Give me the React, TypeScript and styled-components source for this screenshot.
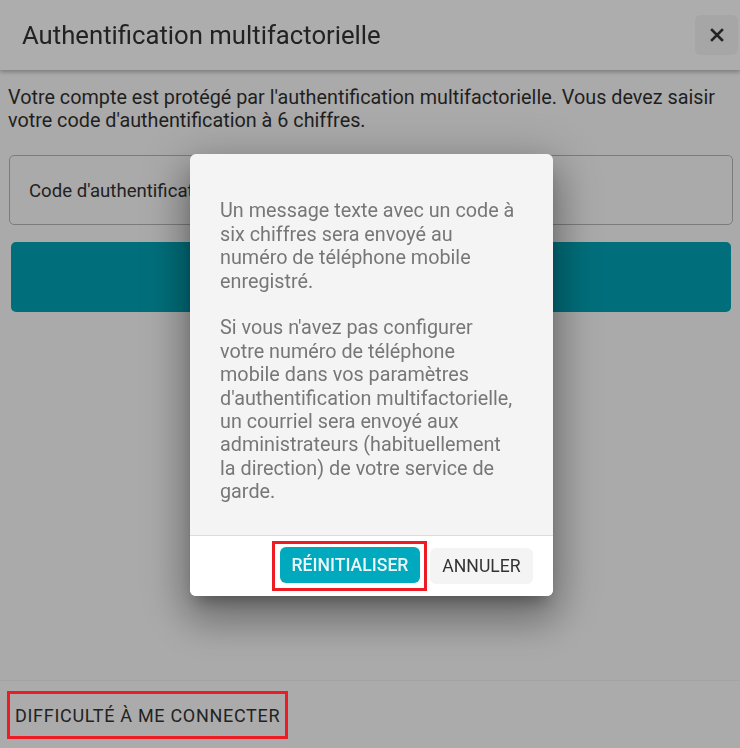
import React from "react";
import styled, { createGlobalStyle } from "styled-components";

const Global = createGlobalStyle`
  html, body { margin: 0; padding: 0; }
  body {
    font-family: Roboto, "Noto Sans", "Liberation Sans", sans-serif;
    background: #aaaaaa;
    width: 740px;
    height: 748px;
    overflow: hidden;
  }
  * { box-sizing: border-box; }
`;

const Page = styled.div`
  height: 748px;
  display: flex;
  flex-direction: column;
  background: #aaaaaa;
`;

const Header = styled.header`
  height: 70px;
  flex: none;
  display: flex;
  align-items: center;
  justify-content: space-between;
  padding: 0 2px 0 22px;
  background: #adadad;
  box-shadow: 0 2px 4px rgba(0, 0, 0, 0.28);
  position: relative;
  z-index: 1;
`;

const Title = styled.h1`
  margin: 0;
  font-size: 25.7px;
  font-weight: 400;
  color: #222222;
  line-height: 1;
  padding-top: 2px;
`;

const CloseButton = styled.button`
  width: 43px;
  height: 40px;
  border: none;
  border-radius: 6px;
  background: #a6a6a6;
  display: flex;
  align-items: center;
  justify-content: center;
  padding: 0;
`;

const Body = styled.main`
  flex: 1;
  padding: 0 7px 0 9px;
  display: flex;
  flex-direction: column;
`;

const Intro = styled.p`
  margin: 16px 0 0 -1px;
  font-size: 19.8px;
  line-height: 23.4px;
  color: #1f1f1f;
`;

const Field = styled.div`
  margin-top: 22px;
  height: 70px;
  border: 1px solid #7c7c7c;
  border-radius: 5px;
  display: flex;
  align-items: center;
  padding: 3px 19px 0;
  font-size: 18.6px;
  color: #222222;
`;

const Submit = styled.div`
  margin: 17px 2px 0 2px;
  height: 70px;
  border-radius: 5px;
  background: #006f7b;
`;

const Footer = styled.footer`
  height: 68px;
  flex: none;
  background: #ababab;
  border-top: 1px solid #a3a3a3;
  display: flex;
  align-items: center;
  padding: 0 0 0 7px;
`;

const Outline = styled.div<{ $pad: string }>`
  border: 3px solid #ed1c24;
  padding: ${(p) => p.$pad};
  display: flex;
`;

const TroubleLink = styled.button`
  height: 42px;
  border: none;
  background: transparent;
  padding: 2px 5px 0 5px;
  font-family: inherit;
  font-size: 18px;
  letter-spacing: 0.7px;
  color: #222222;
  text-transform: uppercase;
`;

const Backdrop = styled.div`
  position: fixed;
  inset: 0;
  display: flex;
  align-items: center;
  justify-content: center;
  padding-left: 3px;
  padding-top: 2px;
`;

const Dialog = styled.div`
  width: 363px;
  border-radius: 6px;
  overflow: hidden;
  background: #f4f4f4;
  box-shadow: 0 11px 15px -7px rgba(0, 0, 0, 0.3),
    0 24px 38px 3px rgba(0, 0, 0, 0.22), 0 9px 46px 8px rgba(0, 0, 0, 0.2);
`;

const DialogContent = styled.div`
  padding: 45px 20px 31px 30px;
  font-size: 19.8px;
  line-height: 23.4px;
  color: #777777;
  white-space: nowrap;
`;

const Para = styled.p<{ $gap?: boolean }>`
  margin: ${(p) => (p.$gap ? "23.4px 0 0" : "0")};
`;

const DialogActions = styled.div`
  height: 61px;
  background: #ffffff;
  border-top: 1px solid #dddddd;
  display: flex;
  align-items: center;
  justify-content: flex-end;
  gap: 3px;
  padding: 0 20px 0 0;
`;

const ActionButton = styled.button<{ $primary?: boolean }>`
  height: 36px;
  border: none;
  border-radius: 6px;
  font-family: inherit;
  font-size: 17.6px;
  font-weight: ${(p) => (p.$primary ? 500 : 400)};
  padding: 0 10px;
  min-width: ${(p) => (p.$primary ? "140px" : "103px")};
  background: ${(p) => (p.$primary ? "#00a9bd" : "#f4f4f4")};
  color: ${(p) => (p.$primary ? "#eaf6f8" : "#333333")};
  text-transform: uppercase;
`;

const CloseIcon = () => (
  <svg width="14" height="14" viewBox="0 0 14 14">
    <path d="M2 2 L12 12 M12 2 L2 12" stroke="#242424" strokeWidth="2.6" strokeLinecap="square" />
  </svg>
);

export default function App() {
  return (
    <>
      <Global />
      <Page>
        <Header>
          <Title>Authentification multifactorielle</Title>
          <CloseButton aria-label="Fermer">
            <CloseIcon />
          </CloseButton>
        </Header>
        <Body>
          <Intro>
            Votre compte est protégé par l'authentification multifactorielle. Vous devez saisir
            votre code d'authentification à 6 chiffres.
          </Intro>
          <Field>Code d'authentification</Field>
          <Submit />
        </Body>
        <Footer>
          <Outline $pad="0">
            <TroubleLink>Difficulté à me connecter</TroubleLink>
          </Outline>
        </Footer>
      </Page>
      <Backdrop>
        <Dialog role="dialog">
          <DialogContent>
            <Para>
              Un message texte avec un code à<br />
              six chiffres sera envoyé au<br />
              numéro de téléphone mobile<br />
              enregistré.
            </Para>
            <Para $gap>
              Si vous n'avez pas configurer<br />
              votre numéro de téléphone<br />
              mobile dans vos paramètres<br />
              d'authentification multifactorielle,<br />
              un courriel sera envoyé aux<br />
              administrateurs (habituellement<br />
              la direction) de votre service de<br />
              garde.
            </Para>
          </DialogContent>
          <DialogActions>
            <Outline $pad="3px 4px 5px 5px">
              <ActionButton $primary>Réinitialiser</ActionButton>
            </Outline>
            <ActionButton>Annuler</ActionButton>
          </DialogActions>
        </Dialog>
      </Backdrop>
    </>
  );
}
